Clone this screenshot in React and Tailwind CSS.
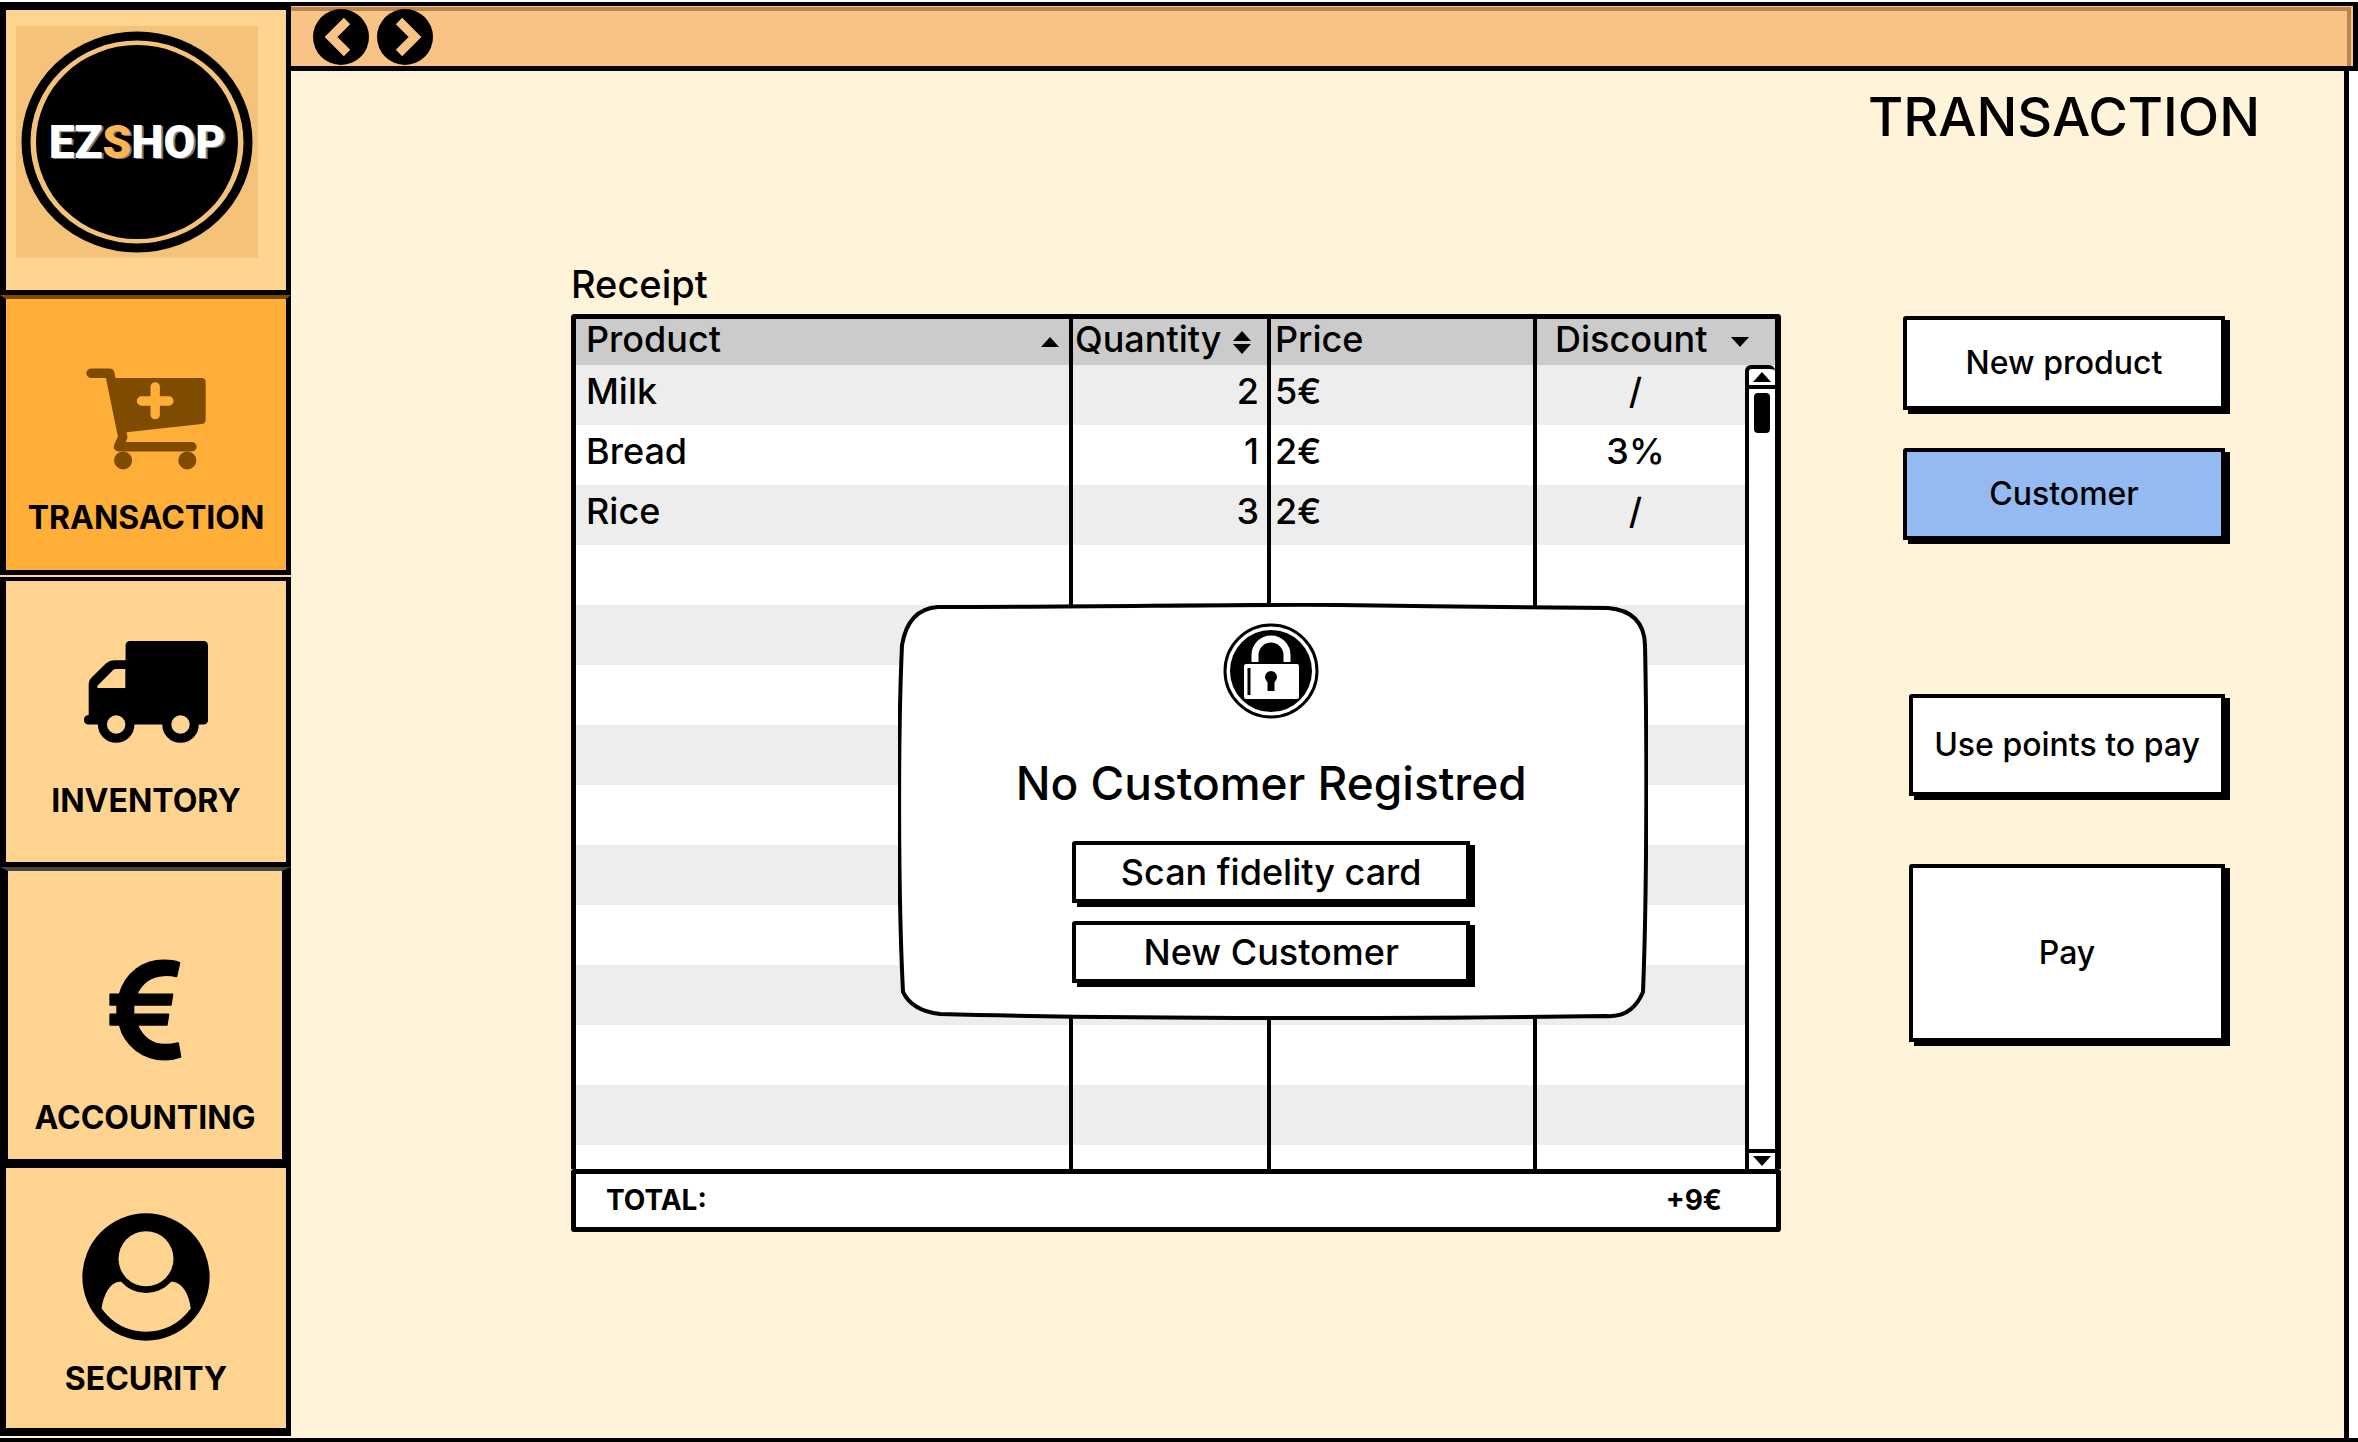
const INK = "border-black";

function CartIcon() {
  return (
    <svg viewBox="257 264 359 304" className="h-[102px] w-[120px]" fill="none" stroke="#7f4b00" strokeWidth="28" strokeLinecap="round" strokeLinejoin="round" aria-hidden="true">
      <path d="M272 279H328L367 470L354 499H574" />
      <path d="M336 293H603Q615 293 615 305V418Q615 430 603 431L378 456H360Z" fill="#7f4b00" stroke="none" />
      <circle cx="368" cy="540" r="27" fill="#7f4b00" stroke="none" />
      <circle cx="560" cy="540" r="27" fill="#7f4b00" stroke="none" />
      <path d="M464 320V403M423 362H505" stroke="#ffaf38" />
    </svg>
  );
}

function TruckIcon() {
  return (
    <svg viewBox="260 240 370 304" className="h-[102px] w-[124px]" aria-hidden="true">
      <rect x="384" y="240" width="246" height="249" rx="13" />
      <path fillRule="evenodd" d="M390 297H350Q336 297 326 306L284 347Q274 357 274 370V461Q260 462 260 475Q260 489 274 489H390ZM384 323V380H300V373L347 326Q350 323 354 323Z" />
      <circle cx="356" cy="489" r="41" fill="#ffd390" stroke="#000" strokeWidth="27" />
      <circle cx="548" cy="489" r="41" fill="#ffd390" stroke="#000" strokeWidth="27" />
    </svg>
  );
}

function EuroIcon() {
  return (
    <svg viewBox="326 296 219 305" className="h-[102px] w-[73px]" aria-hidden="true">
      <path
        d="M537 307L528 347Q510 343 490 344C452 345 422 368 408 402H516L511 433H399V462H504L499 493H410C425 530 455 553 494 553Q515 553 533 548L540 589Q518 597 494 597C428 597 374 555 358 493H330V462H351V433H330V402H358C376 338 428 300 490 300Q518 300 537 307Z"
        stroke="#000"
        strokeWidth="6"
        strokeLinejoin="round"
      />
    </svg>
  );
}

function UserIcon() {
  return (
    <svg viewBox="246 186 384 386" className="size-[128px]" aria-hidden="true">
      <circle cx="438" cy="379" r="192" />
      <circle cx="438" cy="324" r="83" fill="#ffd390" />
      <path d="M304 474C310 430 330 396 357 393H363Q394 427 438 427Q482 427 514 393H520C548 397 568 430 573 474Q520 544 438 544Q356 544 304 474Z" fill="#ffd390" />
    </svg>
  );
}

function LockIcon() {
  return (
    <svg viewBox="0 0 96 96" className="size-[96px]" fill="none" aria-hidden="true">
      <circle cx="48" cy="48" r="46" stroke="#000" strokeWidth="3" />
      <circle cx="48" cy="48" r="41" fill="#000" />
      <path d="M32 39V32a16 16 0 0 1 32 0V39" stroke="#fff" strokeWidth="7" />
      <rect x="21" y="41" width="55" height="35" rx="2" fill="#fff" />
      <path d="M26 45V72" stroke="#000" strokeWidth="3" />
      <circle cx="48" cy="54" r="6" fill="#000" />
      <path d="M48 55V68" stroke="#000" strokeWidth="7" />
    </svg>
  );
}

function ArrowButton({ label, d }) {
  return (
    <button type="button" aria-label={label} className="size-[56px] rounded-full">
      <svg viewBox="0 0 56 56" className="size-full" fill="none" aria-hidden="true">
        <circle cx="28" cy="28" r="28" fill="#000" />
        <path d={d} stroke="#f9c386" strokeWidth="9" />
      </svg>
    </button>
  );
}

function Caret({ down }) {
  return (
    <svg viewBox="0 0 18 10" className="h-[10px] w-[18px]" aria-hidden="true">
      <path d={down ? "M0 0H18L9 10Z" : "M0 10H18L9 0Z"} />
    </svg>
  );
}

function NavItem({ label, icon, className }) {
  return (
    <a href={"#" + label.toLowerCase()} className={"flex flex-col items-center text-[32px] leading-[40px] font-bold " + className}>
      {icon}
      {label}
    </a>
  );
}

function SketchButton({ children, className }) {
  return (
    <button type="button" className={"rounded-tl-[3px] border-4 border-black shadow-[5px_4px_0_#000] " + className}>
      {children}
    </button>
  );
}

const ROWS = [
  ["Milk", "2", "5€", "/"],
  ["Bread", "1", "2€", "3%"],
  ["Rice", "3", "2€", "/"],
  ...Array.from({ length: 11 }, () => ["", "", "", ""]),
];

function Receipt() {
  const head = "border-r-4 border-black p-0 font-medium";
  return (
    <section className="relative min-w-0 flex-1">
      <h2 className="text-[38px] leading-[48px]">Receipt</h2>
      <div className="relative mt-[6px] rounded-t-[4px] border-t-[5px] border-r-[6px] border-l-[5px] border-black bg-white">
        <table className="w-full table-fixed border-separate border-spacing-0 text-[36px] leading-[40px]">
          <colgroup>
            <col />
            <col className="w-[198px]" />
            <col className="w-[266px]" />
            <col className="w-[238px]" />
          </colgroup>
          <thead className="bg-[#cbcbcb]">
            <tr className="h-[46px]">
              <th className={head}>
                <div className="flex items-center justify-between pr-[10px] pl-[10px]">
                  <span className="pb-[6px]">Product</span>
                  <Caret />
                </div>
              </th>
              <th className={head}>
                <div className="flex items-center justify-between pr-[16px] pl-[2px]">
                  <span className="pb-[6px]">Quantity</span>
                  <span className="flex flex-col gap-[3px]">
                    <Caret />
                    <Caret down />
                  </span>
                </div>
              </th>
              <th className={head + " text-left"}>
                <div className="pb-[6px] pl-[4px]">Price</div>
              </th>
              <th className="p-0 font-medium">
                <div className="flex items-center justify-between pr-[26px] pl-[18px]">
                  <span className="pb-[6px]">Discount</span>
                  <Caret down />
                </div>
              </th>
            </tr>
          </thead>
          <tbody>
            {ROWS.map(([product, quantity, price, discount], i) => (
              <tr key={i} className="h-[60px] odd:bg-[#ededed] even:bg-white last:h-[24px]">
                <td className="border-r-4 border-black p-0 pb-[8px] pl-[10px]">{product}</td>
                <td className="border-r-4 border-black p-0 pr-[8px] pb-[8px] text-right">{quantity}</td>
                <td className="border-r-4 border-black p-0 pb-[8px] pl-[4px]">{price}</td>
                <td className="p-0 pr-[41px] pb-[8px] text-center">{discount}</td>
              </tr>
            ))}
          </tbody>
        </table>
        <div className="absolute top-[46px] right-0 bottom-0 flex w-[30px] flex-col items-center rounded-t-[6px] border-t-4 border-l-4 border-black bg-white">
          <div className="flex h-[20px] w-full items-center justify-center border-b-4 border-black">
            <Caret />
          </div>
          <div className="mt-[4px] h-[40px] w-[16px] rounded-[4px] bg-black" />
          <div className="mt-auto flex h-[20px] w-full items-center justify-center border-t-4 border-black">
            <Caret down />
          </div>
        </div>
      </div>
      <div className="flex items-center justify-between rounded-[3px] border-5 border-black bg-white pr-[54px] pl-[30px] text-[28px] leading-[53px] font-bold">
        <span>TOTAL:</span>
        <span>+9€</span>
      </div>
      <CustomerDialog />
    </section>
  );
}

function CustomerDialog() {
  return (
    <div role="dialog" aria-labelledby="dialog-title" className="absolute top-[343px] left-[27%] flex w-[750px] flex-col items-center pt-[20px] pr-[3px] pb-[37px]">
      <svg viewBox="0 0 750 416" preserveAspectRatio="none" className="absolute inset-0 size-full" aria-hidden="true">
        <path
          d="M40 4C200 4 350 1 440 2S640 5 710 5Q746 8 747 42C749 130 749 290 745 388Q734 414 708 412C520 415 230 415 42 410Q14 407 5 388C0 290 0 130 4 42Q10 6 40 4Z"
          fill="#fff"
          stroke="#000"
          strokeWidth="4"
          strokeLinejoin="round"
        />
      </svg>
      <div className="relative flex w-full flex-col items-center">
        <LockIcon />
        <h3 id="dialog-title" className="mt-[32px] text-[46px] leading-[64px]">No Customer Registred</h3>
        <SketchButton className="mt-[26px] w-[398px] bg-white text-[36px] leading-[54px]">Scan fidelity card</SketchButton>
        <SketchButton className="mt-[18px] w-[398px] bg-white text-[36px] leading-[54px]">New Customer</SketchButton>
      </div>
    </div>
  );
}

export default function App() {
  return (
    <div className={"flex min-h-screen flex-col bg-white pt-[2px] pb-[2px] font-['Inter',sans-serif] font-medium text-black"}>
      <div className={"flex flex-1 border-b-4 " + INK}>
        <nav className="flex w-[291px] shrink-0 flex-col bg-[#ffd390]">
          <div className={"border-t-8 border-r-5 border-b-5 border-l-6 pt-[16px] pb-[32px] pl-[10px] " + INK}>
            <div className="relative flex h-[232px] w-[242px] items-center justify-center bg-[#f5c27a]">
              <svg viewBox="0 0 242 232" className="absolute inset-0 size-full" aria-hidden="true">
                <ellipse cx="121" cy="116" rx="111" ry="106" fill="none" stroke="#000" strokeWidth="9" />
                <ellipse cx="121" cy="116" rx="101" ry="97" />
              </svg>
              <span className="relative font-['Roboto',sans-serif] text-[46px] leading-none font-black text-white [text-shadow:2px_1px_0_#777]">
                EZ<span className="text-[#ffb54f]">S</span>HOP
              </span>
            </div>
          </div>
          <NavItem label="TRANSACTION" icon={<CartIcon />} className="gap-[28px] border-t-4 border-t-[#7f4b00] border-r-5 border-r-black border-b-5 border-b-black border-l-6 border-l-black bg-[#ffaf38] pt-[69px] pb-[32px]" />
          <NavItem label="INVENTORY" icon={<TruckIcon />} className={"mt-[2px] gap-[38px] border-t-4 border-r-5 border-b-5 border-l-6 pt-[60px] pb-[41px] " + INK} />
          <NavItem label="ACCOUNTING" icon={<EuroIcon />} className="gap-[37px] border-t-4 border-r-9 border-b-9 border-l-8 border-t-[#444] border-r-black border-b-black border-l-black pt-[88px] pb-[21px]" />
          <NavItem label="SECURITY" icon={<UserIcon />} className={"flex-1 gap-[18px] border-r-5 border-b-8 border-l-6 pt-[45px] pb-[29px] " + INK} />
          <div className="h-[2px] bg-[#fff4d9]" />
        </nav>
        <main className="flex min-w-0 flex-1 flex-col">
          <header className="border-t-4 border-r-5 border-b-5 border-black bg-[#f9c386]">
            <div className="mt-[1px] mr-[2px] h-[59px] border-t-4 border-r-4 border-[#ba8552] pl-[22px]">
              <div className="-mt-[2px] flex gap-[8px]">
                <ArrowButton label="Back" d="M34 12L18 28L34 44" />
                <ArrowButton label="Forward" d="M22 12L38 28L22 44" />
              </div>
            </div>
          </header>
          <div className="mr-[9px] flex-1 border-r-5 border-black bg-[#fff4d9]">
            <h1 className="pt-[14px] pr-[84px] text-right text-[54px] leading-[64px]">TRANSACTION</h1>
            <div className="flex gap-[122px] pt-[111px] pr-[119px] pl-[280px]">
              <Receipt />
              <div className="flex w-[322px] shrink-0 flex-col pt-[56px] text-[32px] leading-[40px]">
                <SketchButton className="bg-white py-[23px]">New product</SketchButton>
                <SketchButton className="mt-[38px] bg-[#94baf2] py-[22px]">Customer</SketchButton>
                <SketchButton className="mt-[154px] ml-[6px] bg-white py-[27px]">Use points to pay</SketchButton>
                <SketchButton className="mt-[68px] ml-[6px] bg-white py-[65px]">Pay</SketchButton>
              </div>
            </div>
          </div>
        </main>
      </div>
    </div>
  );
}
